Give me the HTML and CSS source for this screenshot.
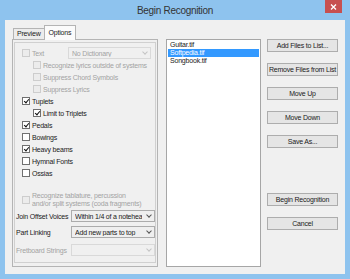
FILE: index.html
```html
<!DOCTYPE html>
<html lang="en">
<head>
<meta charset="UTF-8">
<link rel="stylesheet" href="styles.css">
<title>Begin Recognition</title>
</head>
<body>
<div class="window">
	<div class="titlebar">
		<span class="title">Begin Recognition</span>
		<span class="close"><svg width="7" height="6" viewBox="0 0 7 6"><path d="M1 0.5L6 5.5M6 0.5L1 5.5" stroke="#fff" stroke-width="1.3"/></svg></span>
	</div>

	<div class="client">
		<div class="tabcol">
			<div class="tabstrip">
				<span class="tab">Preview</span>
				<span class="tab active">Options</span>
			</div>
			<div class="tabpage">
				<div class="group">
					<div class="row dis">
						<span class="cb"></span><span class="lbl">Text</span>
						<span class="select sel-dict"><span class="val">No Dictionary</span><span class="arrow"></span></span>
					</div>
					<div class="row sub dis"><span class="cb"></span><span class="lbl">Recognize lyrics outside of systems</span></div>
					<div class="row sub dis"><span class="cb"></span><span class="lbl">Suppress Chord Symbols</span></div>
					<div class="row sub dis"><span class="cb"></span><span class="lbl">Suppress Lyrics</span></div>
					<div class="row"><span class="cb on"></span><span class="lbl">Tuplets</span></div>
					<div class="row sub"><span class="cb on"></span><span class="lbl">Limit to Triplets</span></div>
					<div class="row"><span class="cb on"></span><span class="lbl">Pedals</span></div>
					<div class="row"><span class="cb"></span><span class="lbl">Bowings</span></div>
					<div class="row"><span class="cb on"></span><span class="lbl">Heavy beams</span></div>
					<div class="row"><span class="cb"></span><span class="lbl">Hymnal Fonts</span></div>
					<div class="row"><span class="cb"></span><span class="lbl">Ossias</span></div>
					<div class="row tall dis">
						<span class="cb"></span>
						<span class="lbl">Recognize tablature, percussion<br>and/or split systems (coda fragments)</span>
					</div>

					<div class="field">
						<span class="flbl">Join Offset Voices</span>
						<span class="select"><span class="val">Within 1/4 of a notehead</span><span class="arrow"></span></span>
					</div>
					<div class="field">
						<span class="flbl">Part Linking</span>
						<span class="select"><span class="val">Add new parts to top</span><span class="arrow"></span></span>
					</div>
					<div class="field fret dis">
						<span class="flbl">Fretboard Strings</span>
						<span class="select"><span class="val"></span><span class="arrow"></span></span>
					</div>
				</div>
			</div>
		</div>

		<div class="listbox">
			<div class="item">Guitar.tif</div>
			<div class="item selected">Softpedia.tif</div>
			<div class="item">Songbook.tif</div>
		</div>

		<div class="buttons">
			<span class="btn">Add Files to List...</span>
			<span class="btn">Remove Files from List</span>
			<span class="btn">Move Up</span>
			<span class="btn">Move Down</span>
			<span class="btn">Save As...</span>
			<span class="btn begin">Begin Recognition</span>
			<span class="btn">Cancel</span>
		</div>
	</div>
</div>
</body>
</html>
```

FILE: styles.css
```css
* {
	margin: 0;
	padding: 0;
	box-sizing: border-box;
}

body {
	width: 350px;
	height: 279px;
	overflow: hidden;
	font: 7px "Liberation Sans", Arial, sans-serif;
	letter-spacing: -0.2px;
	color: #1a1a1a;
}

.window {
	width: 350px;
	height: 279px;
	background: #8ec3ee;
	display: flex;
	flex-direction: column;
}

/* title bar */

.titlebar {
	height: 20px;
	position: relative;
	display: flex;
	align-items: center;
	justify-content: center;
}

.title {
	font-size: 10px;
	color: #333;
	letter-spacing: -0.3px;
}

.close {
	position: absolute;
	top: 0;
	right: 8px;
	width: 17px;
	height: 13px;
	background: #c75050;
	display: flex;
	align-items: center;
	justify-content: center;
}

/* client area */

.client {
	flex: 1;
	margin: 0 5px 5px 5px;
	background: #f0f0f0;
	display: flex;
	align-items: flex-start;
	padding: 5px 0 0 7px;
}

.tabcol {
	width: 146px;
	display: flex;
	flex-direction: column;
}

.tabstrip {
	height: 14px;
	display: flex;
	align-items: flex-end;
	padding-left: 1px;
}

.tab {
	height: 11px;
	padding: 0 3px;
	border: 1px solid #b4b4b4;
	border-bottom: 0;
	background: #ececec;
	line-height: 10px;
}

.tab.active {
	height: 15px;
	margin-bottom: -1px;
	margin-left: -1px;
	padding: 0 4px;
	background: #fbfbfb;
	position: relative;
	z-index: 1;
	line-height: 13px;
}

.tabpage {
	height: 228px;
	border: 1px solid #b4b4b4;
	background: #f0f0f0;
	padding: 2px 0 0 1px;
}

.group {
	width: 142px;
	height: 221px;
	border: 1px solid #d0d0d0;
	padding: 4px 0 0 7px;
}

/* checkbox rows */

.row {
	height: 12px;
	display: flex;
	align-items: center;
}

.row.sub {
	padding-left: 11px;
}

.row.tall {
	height: 16px;
	margin-top: 13px;
	line-height: 8px;
}

.cb {
	width: 8px;
	height: 8px;
	flex: none;
	border: 1px solid #707070;
	background: #fff;
	margin-right: 2px;
	position: relative;
}

.cb.on::after {
	content: "";
	position: absolute;
	left: 1px;
	top: 0;
	width: 2px;
	height: 4px;
	border: solid #111;
	border-width: 0 1.3px 1.3px 0;
	transform: translate(1px, 0) rotate(40deg);
}

.dis .lbl,
.dis .flbl {
	color: #a3a3a3;
}

.dis .cb {
	border-color: #cdcdcd;
	background: #ececec;
}

/* drop downs */

.select {
	height: 12px;
	width: 84px;
	margin-left: auto;
	border: 1px solid #acacac;
	background: #efefef;
	display: flex;
	align-items: center;
	padding: 0 3px;
	overflow: hidden;
}

.select .val {
	flex: 1;
	margin-right: 3px;
	white-space: nowrap;
	overflow: hidden;
}

.arrow {
	width: 4px;
	height: 4px;
	flex: none;
	margin: -2px 0 0 2px;
	border: solid #555;
	border-width: 0 1px 1px 0;
	transform: rotate(45deg);
}

.dis .select {
	border-color: #d9d9d9;
	background: #f0f0f0;
	color: #a3a3a3;
}

.dis .arrow {
	border-color: #c4c4c4;
}

.sel-dict {
	width: 83px;
	margin-right: 4px;
}

.field {
	height: 16px;
	display: flex;
	align-items: center;
	margin-left: -6px;
}

.field.fret {
	margin-top: 2px;
}

/* file list */

.listbox {
	width: 95px;
	height: 228px;
	margin: 14px 0 0 8px;
	border: 1px solid #a6a6a6;
	background: #fff;
	padding: 1px;
}

.item {
	height: 8px;
	line-height: 8px;
	padding-left: 2px;
}

.item.selected {
	background: #3399ff;
	color: #fff;
}

/* buttons */

.buttons {
	width: 71px;
	margin: 14px 0 0 6px;
	display: flex;
	flex-direction: column;
	gap: 11px;
}

.btn {
	height: 13px;
	border: 1px solid #adadad;
	background: #e5e5e5;
	display: flex;
	align-items: center;
	justify-content: center;
	white-space: nowrap;
}

.btn.begin {
	margin-top: 34px;
}
```
